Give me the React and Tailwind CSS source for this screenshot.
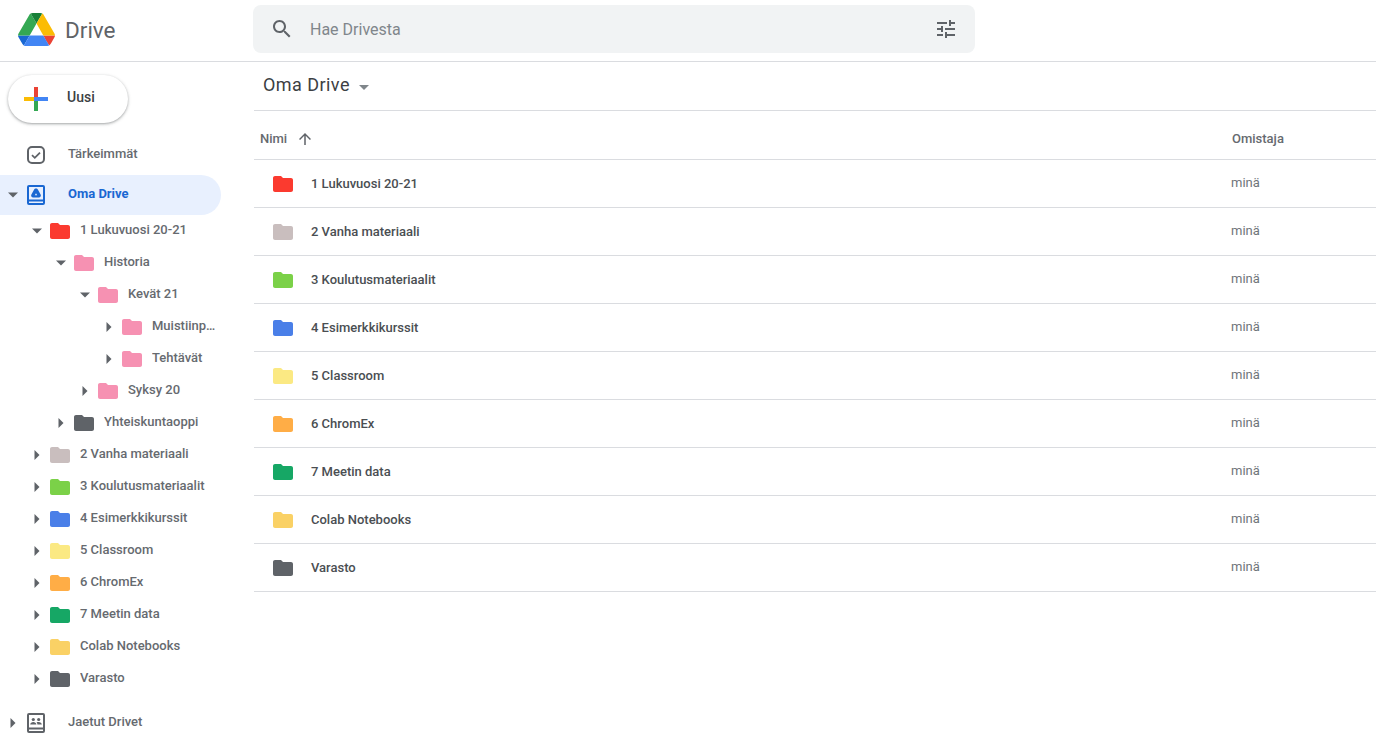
import React from 'react';

const folders = {
  red: '#fb3a2f',
  pink: '#f691b2',
  dark: '#5f6368',
  taupe: '#c9bebe',
  green: '#7bd148',
  blue: '#4a7fe8',
  yellow: '#fbe983',
  orange: '#ffad46',
  teal: '#16a765',
  sand: '#fad165',
};

const indent = {
  1: 'pl-[31px]',
  2: 'pl-[55px]',
  3: 'pl-[79px]',
  4: 'pl-[103px]',
};

const tree = [
  { name: '1 Lukuvuosi 20-21', color: folders.red, level: 1, open: true },
  { name: 'Historia', color: folders.pink, level: 2, open: true },
  { name: 'Kevät 21', color: folders.pink, level: 3, open: true },
  { name: 'Muistiinpanot', color: folders.pink, level: 4 },
  { name: 'Tehtävät', color: folders.pink, level: 4 },
  { name: 'Syksy 20', color: folders.pink, level: 3 },
  { name: 'Yhteiskuntaoppi', color: folders.dark, level: 2 },
  { name: '2 Vanha materiaali', color: folders.taupe, level: 1 },
  { name: '3 Koulutusmateriaalit', color: folders.green, level: 1 },
  { name: '4 Esimerkkikurssit', color: folders.blue, level: 1 },
  { name: '5 Classroom', color: folders.yellow, level: 1 },
  { name: '6 ChromEx', color: folders.orange, level: 1 },
  { name: '7 Meetin data', color: folders.teal, level: 1 },
  { name: 'Colab Notebooks', color: folders.sand, level: 1 },
  { name: 'Varasto', color: folders.dark, level: 1 },
];

const files = tree.filter((f) => f.level === 1);

const Folder = ({ color }) => (
  <svg viewBox="2 4 20 16" className="w-5 h-4 shrink-0" fill={color}>
    <path d="M10 4H4c-1.1 0-2 .9-2 2v12c0 1.1.9 2 2 2h16c1.1 0 2-.9 2-2V8c0-1.1-.9-2-2-2h-8l-2-2z" />
  </svg>
);

const Arrow = ({ open }) => (
  <span className="w-3 h-3 shrink-0 flex items-center justify-center text-[#5f6368]">
    {open ? (
      <svg viewBox="0 0 12 12" className="w-3 h-3" fill="currentColor">
        <path d="M1 3.5h10L6 8.5z" />
      </svg>
    ) : (
      <svg viewBox="0 0 12 12" className="w-3 h-3" fill="currentColor">
        <path d="M3.5 1v10L8.5 6z" />
      </svg>
    )}
  </span>
);

const DriveLogo = () => (
  <svg viewBox="0 0 87.3 78" className="w-[37px] h-[33px] -mt-[3px]">
    <path d="m6.6 66.85 3.85 6.65c.8 1.4 1.95 2.5 3.3 3.3l13.75-23.8h-27.5c0 1.55.4 3.1 1.2 4.5z" fill="#1967d2" />
    <path d="m43.65 25-13.75-23.8c-1.35.8-2.5 1.9-3.3 3.3l-25.4 44a9.06 9.06 0 0 0 -1.2 4.5h27.5z" fill="#34a853" />
    <path d="m73.55 76.8c1.35-.8 2.5-1.9 3.3-3.3l1.6-2.75 7.65-13.25c.8-1.4 1.2-2.95 1.2-4.5h-27.502l5.852 11.5z" fill="#ea4335" />
    <path d="m43.65 25 13.75-23.8c-1.35-.8-2.9-1.2-4.5-1.2h-18.5c-1.6 0-3.15.45-4.5 1.2z" fill="#188038" />
    <path d="m59.8 53h-32.3l-13.75 23.8c1.35.8 2.9 1.2 4.5 1.2h50.8c1.6 0 3.15-.45 4.5-1.2z" fill="#4285f4" />
    <path d="m73.4 26.5-12.7-22c-.8-1.4-1.95-2.5-3.3-3.3l-13.75 23.8 16.15 28h27.45c0-1.55-.4-3.1-1.2-4.5z" fill="#fbbc04" />
  </svg>
);

const Plus = () => (
  <svg viewBox="0 0 24 24" className="w-6 h-6 shrink-0">
    <rect x="10" y="0" width="4" height="10" fill="#ea4335" />
    <rect x="14" y="10" width="10" height="4" fill="#4285f4" />
    <rect x="10" y="14" width="4" height="10" fill="#34a853" />
    <rect x="0" y="10" width="10" height="4" fill="#fbbc04" />
    <rect x="10" y="10" width="4" height="4" fill="#4285f4" />
  </svg>
);

const TreeRow = ({ item }) => (
  <div className={`h-8 flex items-center ${indent[item.level]}`}>
    <Arrow open={item.open} />
    <span className="ml-[7px]">
      <Folder color={item.color} />
    </span>
    <span className="ml-2.5 min-w-0 flex-1 truncate text-[13px] font-medium text-[#666a6f] pb-[3px]">
      {item.name}
    </span>
  </div>
);

export default function App() {
  return (
    <div className="h-[741px] overflow-hidden bg-white font-['Roboto',sans-serif]">
      <header className="h-[62px] flex items-center border-b border-[#dadce0]">
        <div className="w-[253px] shrink-0 flex items-center pl-[18px]">
          <DriveLogo />
          <span className="ml-2.5 text-[22.5px] text-[#5f6368]">Drive</span>
        </div>
        <div className="w-[722px] h-12 -mt-[3px] rounded-lg bg-[#f1f3f4] flex items-center px-[17px]">
          <svg viewBox="0 0 24 24" className="w-6 h-6 text-[#5f6368]" fill="currentColor">
            <path d="M15.5 14h-.79l-.28-.27C15.41 12.59 16 11.11 16 9.5 16 5.91 13.09 3 9.5 3S3 5.91 3 9.5 5.91 16 9.5 16c1.61 0 3.09-.59 4.23-1.57l.27.28v.79l5 4.99L20.49 19l-4.99-5zm-6 0C7.01 14 5 11.99 5 9.5S7.01 5 9.5 5 14 7.01 14 9.5 11.99 14 9.5 14z" />
          </svg>
          <span className="ml-4 flex-1 text-base text-[#80868b] pt-0.5">Hae Drivesta</span>
          <svg viewBox="0 0 24 24" className="w-6 h-6 text-[#5f6368]" fill="currentColor">
            <path d="M3 17v2h6v-2H3zM3 5v2h10V5H3zm10 16v-2h8v-2h-8v-2h-2v6h2zM7 9v2H3v2h4v2h2V9H7zm14 4v-2H11v2h10zm-6-4h2V7h4V5h-4V3h-2v6z" />
          </svg>
        </div>
      </header>

      <div className="flex">
        <aside className="w-[254px] shrink-0">
          <div className="pl-2 pt-[13px]">
            <button className="w-[120px] h-12 rounded-3xl bg-white flex items-center pl-4 shadow-[0_1px_2px_0_rgba(60,64,67,0.3),0_1px_3px_1px_rgba(60,64,67,0.15)]">
              <Plus />
              <span className="ml-[19px] text-sm font-medium text-[#3c4043] pb-1">Uusi</span>
            </button>
          </div>

          <div className="mt-2.5 h-10 flex items-center pl-[27px]">
            <svg viewBox="0 0 18 18" className="w-[18px] h-[18px] mt-[3px] text-[#5f6368]" fill="none" stroke="currentColor" strokeWidth="2">
              <rect x="1" y="1" width="16" height="16" rx="4" />
              <path d="M5 9.2l2.8 2.6L13 6.6" strokeWidth="1.8" />
            </svg>
            <span className="ml-[23px] text-[13px] font-medium text-[#666a6f] pt-0.5">Tärkeimmät</span>
          </div>

          <div className="mt-0.5 w-[221px] h-10 rounded-r-[20px] bg-[#e8f0fe] flex items-center pl-[7px]">
            <Arrow open />
            <svg viewBox="0 0 18 20" className="ml-2 w-[18px] h-5 text-[#1967d2]" fill="currentColor">
              <path d="M2 0h14a2 2 0 0 1 2 2v16a2 2 0 0 1-2 2H2a2 2 0 0 1-2-2V2a2 2 0 0 1 2-2zm0 2v12.5h14V2H2zm0 14.5V18h14v-1.5H2z" fillRule="evenodd" />
              <path d="M9 3.6c1 0 1.6.5 2 1.2l2.6 4.6c.8 1.5-.2 3-1.8 3H6.2c-1.6 0-2.6-1.5-1.8-3L7 4.8c.4-.7 1-1.2 2-1.2z" />
              <path d="M7.8 10.3 9 8.2l1.2 2.1z" fill="#e8f0fe" />
            </svg>
            <span className="ml-[23px] text-[13px] font-bold text-[#1967d2] pb-0.5">Oma Drive</span>
          </div>

          <div className="w-[222px]">
            {tree.map((item) => (
              <TreeRow key={item.name} item={item} />
            ))}
          </div>

          <div className="mt-2 h-10 flex items-center pl-[7px]">
            <Arrow />
            <svg viewBox="0 0 18 20" className="ml-2 w-[18px] h-5 text-[#5f6368]" fill="currentColor">
              <path d="M2 0h14a2 2 0 0 1 2 2v16a2 2 0 0 1-2 2H2a2 2 0 0 1-2-2V2a2 2 0 0 1 2-2zm0 2v12.5h14V2H2zm0 14.5V18h14v-1.5H2z" fillRule="evenodd" />
              <circle cx="6.3" cy="6.5" r="1.6" />
              <circle cx="11.7" cy="6.5" r="1.6" />
              <path d="M3.2 11.5c0-1.6 1.6-2.5 3.1-2.5s3.1.9 3.1 2.5zM10.4 11.5c0-1-.4-1.8-1-2.2.7-.2 1.6-.3 2.3-.3 1.5 0 3.1.9 3.1 2.5z" />
            </svg>
            <span className="ml-[23px] text-[13px] font-medium text-[#666a6f] pb-0.5">Jaetut Drivet</span>
          </div>
        </aside>

        <main className="flex-1 min-w-0">
          <div className="h-[49px] border-b border-[#dadce0] flex items-center pl-[9px]">
            <span className="text-lg tracking-[0.45px] text-[#3c4043] pb-0.5">Oma Drive</span>
            <svg viewBox="0 0 10 5" className="ml-[9px] mt-0.5 w-2.5 h-[5px]" fill="#80868b">
              <path d="M0 0h10L5 5z" />
            </svg>
          </div>
          <div className="h-[49px] border-b border-[#dadce0] flex items-center pt-2 text-[13px] font-medium text-[#666a6f]">
            <div className="flex-1 flex items-center pl-1.5">
              <span>Nimi</span>
              <svg viewBox="0 0 24 24" className="ml-[9px] w-[18px] h-[18px] text-[#5f6368]" fill="currentColor">
                <path d="M4 12l1.41 1.41L11 7.83V20h2V7.83l5.58 5.59L20 12l-8-8-8 8z" />
              </svg>
            </div>
            <div className="w-[144px]">Omistaja</div>
          </div>
          {files.map((file) => (
            <div key={file.name} className="h-12 border-b border-[#dadce0] flex items-center">
              <div className="flex-1 flex items-center pl-[19px]">
                <Folder color={file.color} />
                <span className="ml-[18px] text-[13px] font-medium text-[#4a4e52]">{file.name}</span>
              </div>
              <div className="w-[145px] text-[13px] text-[#70757a] pb-0.5">minä</div>
            </div>
          ))}
        </main>
      </div>
    </div>
  );
}
